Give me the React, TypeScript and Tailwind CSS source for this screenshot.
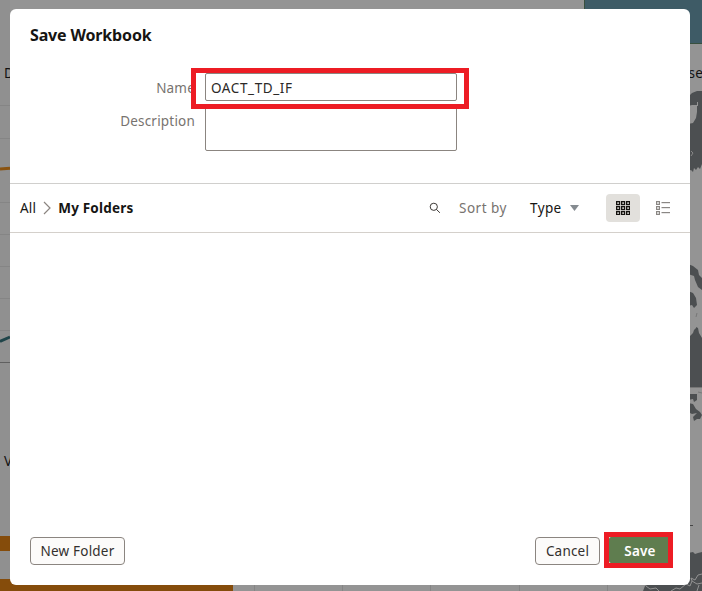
import React from "react";

function Backdrop() {
  return (
    <svg className="absolute inset-0" width="702" height="591" viewBox="0 0 702 591">
      <rect width="702" height="591" fill="#949494" />
      <rect x="0" y="0" width="10" height="591" fill="#909090" />
      <rect x="584" y="0" width="118" height="43" fill="#3e5b66" />
      <path d="M584.5 0V43.5H702" fill="none" stroke="#38503e" />
      <g stroke="#858585" strokeWidth="1">
        <path d="M0 105.5H10M0 138.5H10M0 202.5H10M0 234.5H10M0 266.5H10M0 298.5H10M0 330.5H10" />
        <path d="M254.5 585V591M342.5 585V591M430.5 585V591M519.5 585V591M607.5 585V591" />
      </g>
      <path d="M0 362.5H10" stroke="#606060" />
      <path d="M0 169L10 168.3" stroke="#8a5310" strokeWidth="3" />
      <path d="M0 341.5L10 337" stroke="#20454a" strokeWidth="3" />
      <rect x="0" y="536" width="10" height="15" fill="#854c0b" />
      <rect x="0" y="579" width="233" height="12" fill="#854c0b" />
      <g fill="#4c4f51">
        <path d="M688 97L692 93L697 91H702V164L700 169L698 167L696 170L694 168L693 172L691 170L688 171V124L693 123L696 118L697 112V106H698V102H697V105H692L688 106Z" />
        <path d="M688 264L693 266L698 270L699 275L702 278V290L698 287L695 280L694 276L688 274Z" />
        <path d="M688 291L693 293L696 298L697 305L694 308L692 305L688 306Z" />
        <path d="M688 338L693 333L694 330L696 328V327L698 328L699 333L702 338V387H688Z" />
        <path d="M688 394H697V400L694 402L693 399L688 400Z" />
        <path d="M688 403L693 404L696 409L700 412L702 415L700 419H697L694 421L693 417L697 413L692 414L688 412Z" />
        <path d="M643 591L645 586L647 585H680L688 553L693 552L695 554L698 553L702 552V591Z" />
      </g>
      <path d="M697 313L696 317M698 392L702 393M690 387.5H702" stroke="#777" fill="none" />
      <path d="M690 525.5H693" stroke="#454545" />
      <path d="M646 586L650 589L656 588L659 591M671 591L676 588L680 589L686 584L690 586L692 581L691 578L695 580L698 575L702 574M692 581L697 584L702 583M697 591L699 585" stroke="#929292" fill="none" />
      <path d="M691 151L693 153L691 156" stroke="#878787" fill="none" />
      <g fontFamily="'Noto Sans', sans-serif" fontSize="13.5" fill="#111">
        <text x="4" y="78">D</text>
        <text x="4" y="466">V</text>
        <text x="688.5" y="78">se</text>
      </g>
    </svg>
  );
}

function SearchIcon() {
  return (
    <svg width="12" height="12" viewBox="0 0 12 12" fill="none" stroke="#3d3936" strokeWidth="1">
      <circle cx="4.8" cy="4.8" r="3.6" />
      <path d="M7.4 7.4L10.9 10.8" />
    </svg>
  );
}

function GridIcon() {
  return (
    <svg width="14" height="14" viewBox="0 0 14 14" fill="none" stroke="#14120f" strokeWidth="1.3">
      {[0, 5, 10].map((y) =>
        [0, 5, 10].map((x) => <rect key={`${x}-${y}`} x={x + 0.65} y={y + 0.65} width="2.9" height="2.9" />)
      )}
    </svg>
  );
}

function ListIcon() {
  return (
    <svg width="14" height="14" viewBox="0 0 14 14" fill="none" stroke="#8a8784" strokeWidth="1.2">
      {[0, 5, 10].map((y) => (
        <React.Fragment key={y}>
          <rect x="0.6" y={y + 0.6} width="2.8" height="2.8" />
          <path d={`M5.5 ${y + 1.6}H14`} />
        </React.Fragment>
      ))}
    </svg>
  );
}

export default function App() {
  return (
    <div className="relative h-[591px] w-[702px] overflow-hidden pl-[10px] pr-[12px] pt-[9px] font-['Noto_Sans',sans-serif] text-[13.5px] leading-5 tracking-[0.2px] text-[#161513]">
      <Backdrop />
      <main className="relative flex h-[576px] flex-col rounded-md bg-white">
        <section className="h-[175px] shrink-0 border-b border-[#d0cfcd] px-5 pt-4">
          <h1 className="text-[16px] font-bold leading-5 tracking-[-0.15px]">Save Workbook</h1>
          <div className="mt-7 flex h-7 gap-[10px]">
            <label className="w-[165px] pt-[5px] text-right text-[#77736f]">Name</label>
            <div className="relative w-[252px]">
              <input
                className="block h-7 w-full rounded-xs border border-[#8b8580] bg-white px-[5px] pt-[2px] tracking-[0.6px] text-[#2b2927] outline-none"
                defaultValue="OACT_TD_IF"
              />
              <div className="pointer-events-none absolute -left-[14px] -top-[5px] z-10 h-[41px] w-[278px] border-[5px] border-[#ed1c24]" />
            </div>
          </div>
          <div className="mt-[5px] flex gap-[10px]">
            <label className="w-[165px] pt-[5px] text-right text-[#77736f]">Description</label>
            <textarea className="block h-[45px] w-[252px] resize-none rounded-xs border border-[#8b8580] bg-white outline-none" />
          </div>
        </section>
        <nav className="flex h-[49px] shrink-0 items-center border-b border-[#d4d0cb] pl-[10px] pr-[10px]">
          <span>All</span>
          <svg className="ml-[7px] mr-[7px]" width="8" height="14" viewBox="0 0 8 14" fill="none" stroke="#8b8580" strokeWidth="1.2">
            <path d="M1 1L7 7L1 13" />
          </svg>
          <span className="font-bold">My Folders</span>
          <div className="ml-auto flex items-center">
            <SearchIcon />
            <span className="ml-[18px] w-[71px] tracking-[0.5px] text-[#77736f]">Sort by</span>
            <span className="w-[40px] tracking-[0.4px]">Type</span>
            <svg width="9" height="6" viewBox="0 0 9 6">
              <path d="M0 0H9L4.5 6Z" fill="#858b90" />
            </svg>
            <button className="ml-[27px] flex h-7 w-[34px] items-center justify-center rounded bg-[#e2e0dc]">
              <GridIcon />
            </button>
            <button className="ml-[6px] flex h-7 w-[34px] items-center justify-center">
              <ListIcon />
            </button>
          </div>
        </nav>
        <div className="flex-1" />
        <footer className="flex h-12 shrink-0 items-start pl-5 pr-[17px] text-[#33302e]">
          <button className="h-7 w-[95px] rounded border border-[#8b8580] bg-[#fcfbfa]">New Folder</button>
          <button className="ml-auto h-7 w-[65px] rounded border border-[#8b8580] bg-[#fcfbfa]">Cancel</button>
          <div className="-mt-[5px] ml-1 h-9 w-[69px] border-[5px] border-[#ed1c24]">
            <button className="h-[26px] w-[59px] rounded-l-xs bg-[#5f7d4f] pl-[3px] pt-[2px] font-semibold text-white">Save</button>
          </div>
        </footer>
      </main>
    </div>
  );
}
